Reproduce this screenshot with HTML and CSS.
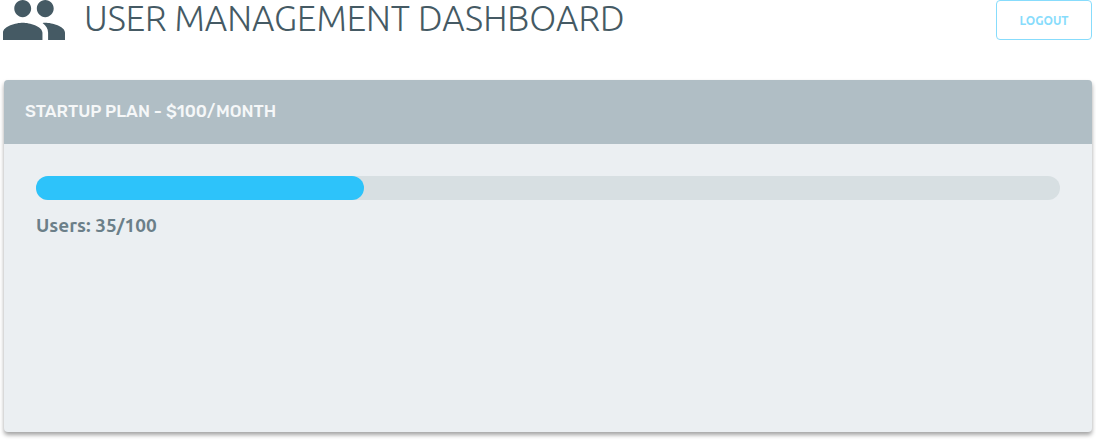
FILE: index.html
```html
<!DOCTYPE html>
<html lang="en">
<head>
<meta charset="utf-8">
<meta name="viewport" content="width=device-width, initial-scale=1">
<title>User Management Dashboard</title>
<link rel="stylesheet" href="styles.css">
</head>
<body>
<header class="header">
  <svg class="header-icon" viewBox="1 5 22 14" preserveAspectRatio="none" aria-hidden="true"><path d="M16 11c1.660 0 2.990-1.340 2.990-3S17.660 5 16 5s-3 1.340-3 3 1.340 3 3 3zm-8 0c1.660 0 2.990-1.340 2.990-3S9.660 5 8 5 5 6.340 5 8s1.340 3 3 3zm0 2c-2.330 0-7 1.170-7 3.500V19h14v-2.500c0-2.330-4.670-3.500-7-3.500zm8 0c-.290 0-.620.020-.970.050 1.160.840 1.970 1.970 1.970 3.450V19h6v-2.500c0-2.330-4.670-3.500-7-3.500z"/></svg>
  <h1 class="title">USER MANAGEMENT DASHBOARD</h1>
  <button class="logout" type="button">LOGOUT</button>
</header>
<main class="card">
  <h2 class="card-header">STARTUP PLAN - $100/MONTH</h2>
  <div class="card-body">
    <div class="progress" role="progressbar" aria-labelledby="usage" aria-valuenow="35" aria-valuemin="0" aria-valuemax="100"><div class="progress-fill"></div></div>
    <p class="usage" id="usage">Users: 35/100</p>
  </div>
</main>
</body>
</html>
```
FILE: styles.css
```css
* {
  box-sizing: border-box;
}

body {
  margin: 0;
  background: #fff;
  font-family: Ubuntu, "Noto Sans", sans-serif;
  color: #455a64;
}

.header {
  display: flex;
  align-items: flex-start;
  padding: 0 4px 0 3px;
}

.header-icon {
  width: 62px;
  height: 40px;
  flex: none;
  fill: #455a64;
}

.title {
  flex: 1;
  margin: 0 0 0 19px;
  font-size: 35px;
  font-weight: 300;
  line-height: 36px;
}

.logout {
  width: 96px;
  height: 40px;
  padding: 0;
  border: 1px solid #87dcfc;
  border-radius: 4px;
  background: #fff;
  color: #87dcfc;
  font-family: Ubuntu, "Noto Sans", sans-serif;
  font-size: 12px;
  font-weight: 700;
}

.card {
  margin: 40px 4px 8px;
  border-radius: 4px;
  background: #ebeff2;
  box-shadow: 0 3px 4px rgba(0, 0, 0, 0.36);
}

.card-header {
  margin: 0;
  padding: 19px 21px 21px;
  border-radius: 4px 4px 0 0;
  background: #b0bec5;
  color: #f5f7f8;
  font-family: Rubik, Roboto, sans-serif;
  font-size: 17px;
  font-weight: 500;
  line-height: 24px;
}

.card-body {
  min-height: 288px;
  padding: 32px;
}

.progress {
  height: 24px;
  border-radius: 12px;
  background: #d7dfe2;
}

.progress-fill {
  width: 32%;
  height: 100%;
  border-radius: 12px;
  background: #2dc3fa;
}

.usage {
  margin: 11px 0 0;
  color: #6b7f89;
  font-size: 19px;
  font-weight: 700;
  line-height: 28px;
}
```
